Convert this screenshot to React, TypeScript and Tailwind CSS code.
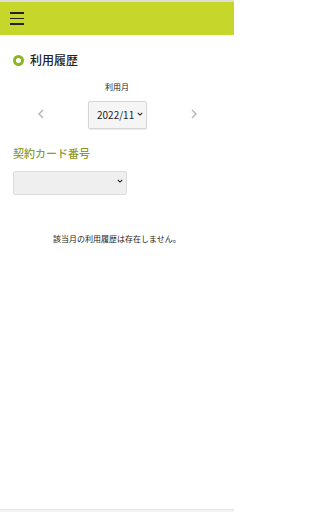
function Caret({ className }: { className?: string }) {
  return (
    <svg viewBox="0 0 8 5" className={className} fill="none" stroke="#222" strokeWidth="1.4">
      <path d="M1 1l3 3 3-3" />
    </svg>
  )
}

function Arrow({ dir }: { dir: 'left' | 'right' }) {
  return (
    <svg viewBox="0 0 6 10" className="h-[10px] w-[6px]" fill="none" stroke="#b5b5b5" strokeWidth="1.4">
      <path d={dir === 'left' ? 'M5 1L1 5l4 4' : 'M1 1l4 4-4 4'} />
    </svg>
  )
}

export default function App() {
  return (
    <div
      className="flex min-h-[512px] w-[234px] flex-col bg-white text-[#222]"
      style={{ fontFamily: '"Noto Sans CJK JP", "Noto Sans", sans-serif' }}
    >
      {/* Header */}
      <header className="flex h-[35px] items-center border-t-2 border-[#dcdcdc] bg-[#c6d62b] pl-[10px]">
        <button className="flex w-[14px] flex-col gap-[4px]">
          <span className="h-[1.5px] w-full bg-[#222]" />
          <span className="h-[1.5px] w-full bg-[#222]" />
          <span className="h-[1.5px] w-full bg-[#222]" />
        </button>
      </header>

      <main className="flex flex-1 flex-col px-[13px]">
        {/* Title */}
        <div className="mt-[19px] flex items-center gap-[6px]">
          <span className="h-[11px] w-[11px] rounded-full border-[3px] border-[#8db51e]" />
          <h1 className="text-[12px] font-medium leading-none">利用履歴</h1>
        </div>

        {/* Month selector */}
        <div className="mt-[17px] flex flex-col items-center">
          <span className="text-[8px] leading-none">利用月</span>
          <div className="mt-[9px] flex w-full items-center justify-between pl-[25px] pr-[24px]">
            <Arrow dir="left" />
            <div className="relative">
              <select className="h-[28px] w-[59px] appearance-none rounded-[2px] border border-[#d5d5d5] bg-[#f5f5f5] pl-[8px] text-[10px] shadow-[0_1px_1px_rgba(0,0,0,0.08)]">
                <option>2022/11</option>
              </select>
              <Caret className="pointer-events-none absolute right-[4px] top-[12px] h-[4px] w-[6px]" />
            </div>
            <Arrow dir="right" />
          </div>
        </div>

        {/* Card number */}
        <h2 className="mt-[19px] text-[11px] font-medium leading-none text-[#8c9a2b]">契約カード番号</h2>
        <div className="relative mt-[10px] w-[114px]">
          <select className="h-[24px] w-full appearance-none rounded-[2px] border border-[#ddd] bg-[#efefef] text-[10px]">
            <option></option>
          </select>
          <Caret className="pointer-events-none absolute right-[4px] top-[10px] h-[4px] w-[6px]" />
        </div>

        <p className="mt-[40px] text-center text-[8px] leading-none">該当月の利用履歴は存在しません。</p>
      </main>

      <footer className="h-[3px] border-t border-[#e5e5e5] bg-[#f3f3f3]" />
    </div>
  )
}
